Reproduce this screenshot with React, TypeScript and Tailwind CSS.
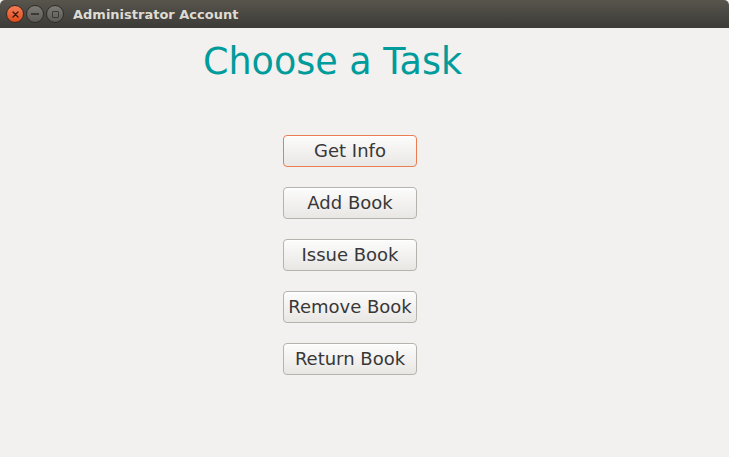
const tasks = ['Get Info', 'Add Book', 'Issue Book', 'Remove Book', 'Return Book'];

function WindowButtons() {
  return (
    <div className="flex items-center gap-[2px] pl-[6px]">
      <div className="flex h-[18px] w-[18px] items-center justify-center rounded-full border border-[#3a2a22] bg-gradient-to-b from-[#f57e55] to-[#df4a16]">
        <svg width="7" height="7" viewBox="0 0 7 7">
          <path d="M1 1L6 6M6 1L1 6" stroke="#3b1a0e" strokeWidth="1.4" strokeLinecap="round" />
        </svg>
      </div>
      <div className="flex h-[18px] w-[18px] items-center justify-center rounded-full border border-[#2e2d29] bg-gradient-to-b from-[#7d7b74] to-[#5d5b55]">
        <div className="h-[2px] w-[8px] bg-[#3a3934]" />
      </div>
      <div className="flex h-[18px] w-[18px] items-center justify-center rounded-full border border-[#2e2d29] bg-gradient-to-b from-[#7d7b74] to-[#5d5b55]">
        <div className="h-[7px] w-[7px] rounded-[1px] border-[1.5px] border-[#3a3934]" />
      </div>
    </div>
  );
}

export default function App() {
  return (
    <div className="flex h-[457px] w-[729px] flex-col overflow-hidden bg-[#f2f1f0] font-['DejaVu_Sans',sans-serif]">
      <div className="flex h-[28px] shrink-0 items-center rounded-t-[5px] bg-gradient-to-b from-[#58554d] to-[#3c3b37]">
        <WindowButtons />
        <span className="ml-[9px] pt-[1px] text-[13px] font-bold text-[#dfdbd2]">Administrator Account</span>
      </div>
      <div className="flex flex-col">
        <h1 className="ml-[203px] mt-[11px] h-[46px] text-[36.5px] leading-[46px] text-[#009b9b]">Choose a Task</h1>
        <div className="ml-[283px] mt-[50px] flex flex-col gap-[20px]">
          {tasks.map((t, i) => (
            <button
              key={t}
              className={`flex h-[32px] w-[134px] items-center justify-center rounded-[4px] border bg-gradient-to-b from-[#fcfcfc] to-[#e9e7e4] pb-[2px] text-[18px] text-[#383838] shadow-[inset_0_1px_0_#ffffff] ${
                i === 0 ? 'border-[#ec7d52]' : 'border-[#b6b3ae]'
              }`}
            >
              {t}
            </button>
          ))}
        </div>
      </div>
    </div>
  );
}
